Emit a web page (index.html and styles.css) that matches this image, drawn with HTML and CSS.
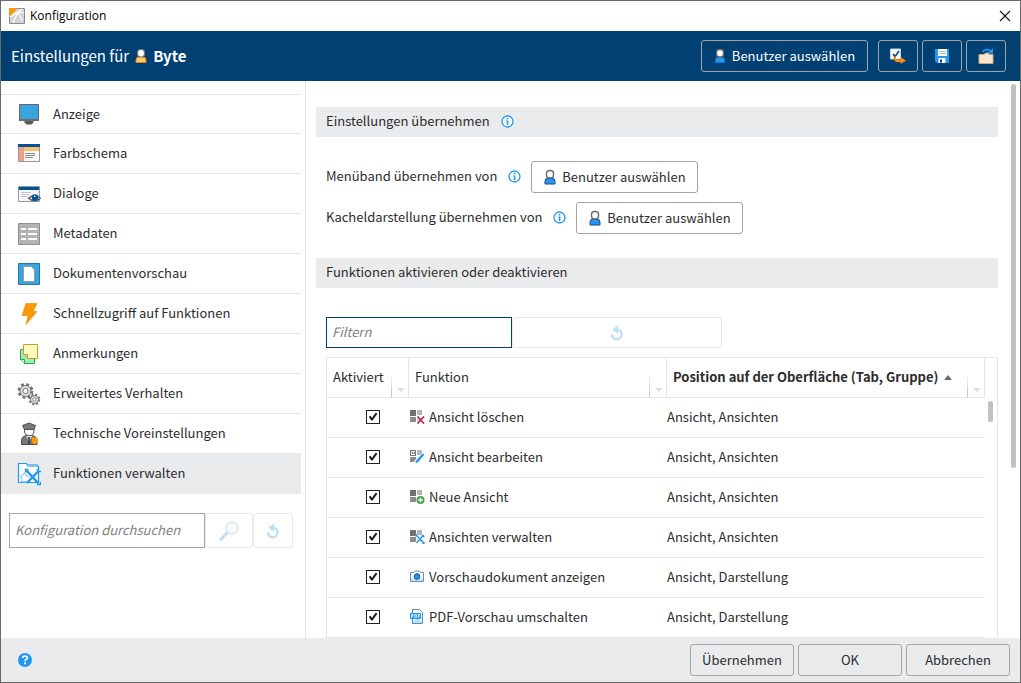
FILE: index.html
```html
<!DOCTYPE html>
<html lang="de">
<head>
<meta charset="utf-8">
<title>Konfiguration</title>
<link rel="stylesheet" href="styles.css">
</head>
<body>
<svg class="sprite" aria-hidden="true">
  <symbol id="user" viewBox="0 0 12 16">
    <path d="M1 15v-2.500q0-3.500 3-3.500h4q3 0 3 3.500V15z" fill="#2196f3" stroke="#174a8c"/>
    <path d="M3.500 8.500 2.500 9.500h7l-1-1z" fill="#2f6fb5"/>
    <rect x="2.500" y="1.500" width="7" height="7.500" rx="3" fill="#fff" stroke="#6b6b6b" stroke-width="1.400"/>
  </symbol>
  <symbol id="info" viewBox="0 0 13 13">
    <circle cx="6.500" cy="6.500" r="5.500" fill="#fff" stroke="#2196f3" stroke-width="1.300"/>
    <path d="M5.700 3h1.600v1.500H5.700zM5.200 5.500h2.200V10H5.800V6.500h-.6z" fill="#2196f3"/>
  </symbol>
  <symbol id="undo" viewBox="0 0 14 16">
    <path d="M7.300 4.600A4.800 4.800 0 1 1 2 9.200" fill="none" stroke="#bbdefb" stroke-width="2.400"/>
    <path d="M8 0v9L2.600 4.700z" fill="#bbdefb"/>
  </symbol>
  <symbol id="tiles" viewBox="0 0 15 15">
    <path d="M0 1h6v6H0z" fill="#6f7072"/>
    <path d="M7 1h5v5H7z" fill="#b4b5b6"/>
    <path d="M0 8h6v5H0z" fill="#8c8d8e"/>
    <path d="M7 8h3v5H7z" fill="#a6a7a8"/>
  </symbol>
</svg>
<div class="window">
  <div class="titlebar">
    <svg class="app-icon" viewBox="0 0 16 16"><path d="M.5.500h15v15H.5z" fill="#d4d4d4" stroke="#8a8a8a"/><path d="M1 9 9 4l6 1M9 4l4-3M9 4l4 8M9 4 4 15" fill="none" stroke="#fff" stroke-width="1.200"/><path d="M0 0h9L0 9z" fill="#f39a0b"/></svg>
    <span class="titlebar-text">Konfiguration</span>
    <button class="close" aria-label="Schließen"><svg viewBox="0 0 12 12"><path d="m1 1 10 10M11 1 1 11" stroke="#111" stroke-width="1.100"/></svg></button>
  </div>

  <header class="header">
    <h1 class="heading">Einstellungen für
      <svg class="icon-user" viewBox="0 0 12 16"><path d="M1 14.500V12q0-3 3-3h4q3 0 3 3v2.500z" fill="#ffcc66" stroke="#f57c00"/><rect x="2.500" y="1.500" width="7" height="7.500" rx="3" fill="#fff" stroke="#777" stroke-width="1.200"/></svg>
      <b>Byte</b></h1>
    <button class="btn btn-dark"><svg class="icon-user"><use href="#user"/></svg>Benutzer auswählen</button>
    <div class="tools">
      <button class="btn btn-dark btn-icon" aria-label="Optionen übertragen"><svg viewBox="0 0 16 16"><path d="M.5 1h10v10H.5z" fill="#f7fbff" stroke="#c9d7e8"/><path d="m3 6 2 2.500L9 3" fill="none" stroke="#174a8c" stroke-width="1.700"/><path d="M4.500 8.500q0 5 4.500 4.500h2" fill="none" stroke="#fb8c00" stroke-width="2.200"/><path d="M10.500 8.700 16 12.800l-5.500 3.200z" fill="#fb8c00"/></svg></button>
      <button class="btn btn-dark btn-icon" aria-label="Speichern"><svg viewBox="0 0 16 16"><path d="M1 1h14v14H3l-2-2z" fill="#2196f3"/><path d="M4 1h9v7H4z" fill="#fff"/><path d="M5 3.500h7M5 5.500h7" stroke="#b9c3cc"/><path d="M4.500 10h7v5h-7z" fill="#fff"/><path d="M6 11.500h2v3H6z" fill="#0b3f78"/></svg></button>
      <button class="btn btn-dark btn-icon" aria-label="Laden"><svg viewBox="0 0 16 16"><path d="M1 15.500V6.500h5l1.500-1.500H11v1.500h4v9z" fill="#f8e8cf" stroke="#d2a679"/><path d="M4.500 4q3-4 8-1" fill="none" stroke="#2196f3" stroke-width="1.700"/><path d="M15 0v5.500H9.500z" fill="#2196f3"/></svg></button>
    </div>
  </header>

  <div class="body">
    <aside class="sidebar">
      <nav class="nav">
        <a class="nav-item" href="#anzeige"><svg viewBox="0 0 24 24"><path d="M2.500 2.500h19v16h-19z" fill="#38a5de" stroke="#666"/><path d="M2 17h20v2H2z" fill="#6b6b6b"/><path d="M7.500 19h9v1.500l-2 2h-5l-2-2z" fill="#58595b"/></svg>Anzeige</a>
        <a class="nav-item" href="#farbschema"><svg viewBox="0 0 24 24"><path d="M1.500 2.500h21v17h-21z" fill="#f5f6f7" stroke="#999"/><path d="M1 2h22v3H1z" fill="#00539b"/><path d="M7 5h15v4H7z" fill="#fdbf6b"/><path d="M2 5h5v14H2z" fill="#ef9f88"/><path d="M8 11.500h10M8 13.500h10M8 15.500h8" stroke="#8c8c8c"/></svg>Farbschema</a>
        <a class="nav-item" href="#dialoge"><svg viewBox="0 0 24 24"><path d="M1.500 4.500h21v15h-21z" fill="#f5f6f7" stroke="#999"/><path d="M2 5h20v3H2z" fill="#00539b"/><path d="M4 10.500h10M4 12.500h8M4 14.500h6" stroke="#c4c4c4"/><path d="M11.500 16.300q6.200-6 12 0-5.800 5.200-12 0z" fill="#fff" stroke="#555" stroke-width="1.200"/><circle cx="18" cy="15.500" r="3.300" fill="#00539b"/><path d="m17 13 2 2h-2z" fill="#fff"/></svg>Dialoge</a>
        <a class="nav-item" href="#metadaten"><svg viewBox="0 0 24 24"><path d="M1.500 1.500h21v21h-21z" fill="#b3b3b3" stroke="#8f8f8f"/><path d="M4 7h5M11 7h9M4 12h5M11 12h9M4 17h5M11 17h9" stroke="#fff" stroke-width="2"/></svg>Metadaten</a>
        <a class="nav-item" href="#dokumentenvorschau"><svg viewBox="0 0 24 24"><path d="M1.500 1.500h21v21h-21z" fill="#38a5de" stroke="#2477aa"/><path d="M6.500 4.500h8l3 3.500v11.500h-11z" fill="#fff" stroke="#9a9a9a"/></svg>Dokumentenvorschau</a>
        <a class="nav-item" href="#schnellzugriff"><svg viewBox="0 0 24 24"><path d="M9 1.500h11l-4 8h4L9 22.500l2-9H5z" fill="#fb9a00" stroke="#f08400" stroke-width=".6"/></svg>Schnellzugriff auf Funktionen</a>
        <a class="nav-item" href="#anmerkungen"><svg viewBox="0 0 24 24"><path d="M3.500 7.500h14v14h-10l-4-4z" fill="#98f0c0" stroke="#27a844"/><path d="M3.500 17.500h4v4" fill="#d5ffe5" stroke="#27a844"/><path d="M6.500 2.500h14v14h-10l-4-4z" fill="#fffabd" stroke="#c79a2c"/><path d="M6.500 12.500h4v4" fill="#f0cc6c" stroke="#c79a2c"/></svg>Anmerkungen</a>
        <a class="nav-item" href="#verhalten"><svg viewBox="0 0 24 24"><g fill="#ddd" stroke="#6f6f6f"><circle cx="8.500" cy="9" r="6.500" stroke-dasharray="2.700 2.400" stroke-width="2.800" fill="none"/><circle cx="8.500" cy="9" r="5.600"/><circle cx="8.500" cy="9" r="2.600" fill="#fff"/><circle cx="17.500" cy="17.500" r="4.700" stroke-dasharray="2 1.700" stroke-width="2.200" fill="none"/><circle cx="17.500" cy="17.500" r="4" stroke-width=".8"/><circle cx="17.500" cy="17.500" r="1.700" stroke-width=".8" fill="#fff"/></g></svg>Erweitertes Verhalten</a>
        <a class="nav-item" href="#technisch"><svg viewBox="0 0 24 24"><path d="M4.500 22.500V19q0-4.500 4.500-5.500h6.500q4.500 1 4.500 5.500v3.500z" fill="#77787a" stroke="#4d4d4f"/><path d="m9 13.500 3 6 3.500-6z" fill="#d9d9d9"/><path d="M12 15v7" stroke="#333" stroke-width="1.500"/><path d="M7.500 5h9.500v4q0 4.500-4.700 4.500T7.500 9z" fill="#fff" stroke="#555"/><path d="M5.500 3.500 12 1l6.500 2.500-1.500 4h-9.500z" fill="#77787a" stroke="#4d4d4f"/><path d="M15 15.500h5.500V20q-1 2-2.800 2.500Q16 22 15 20z" fill="#fb9a00"/></svg>Technische Voreinstellungen</a>
        <a class="nav-item is-active" href="#funktionen" aria-current="page"><svg viewBox="0 0 24 24"><path d="M1.500 20.500v-19h8l1.500 2.500h10.500v16.500z" fill="#fff" stroke="#2196f3" stroke-width="1.200"/><path d="M11 2h10v2.500h-9z" fill="#7bbcf0"/><path d="M3 15.500 7.500 11l4 4.500M4.500 15v4.500h7" fill="none" stroke="#a9cdea" stroke-width="1.500"/><path d="m9.500 8.500 12 13M22 8.500l-12 12.500" stroke="#2196f3" stroke-width="2.500"/><path d="M8.500 10.500V7.500h3M20 7l1.500 2.500h3M20 22.500h3.500V20" fill="none" stroke="#2196f3" stroke-width="1.400"/></svg>Funktionen verwalten</a>
      </nav>
      <form class="search">
        <input class="field" type="text" placeholder="Konfiguration durchsuchen" aria-label="Konfiguration durchsuchen">
        <button class="ghost ghost-search" type="button" aria-label="Suchen"><svg viewBox="0 0 20 20"><path d="m1 19 8-8" stroke="#bbdefb" stroke-width="3"/><circle cx="13" cy="7" r="6" fill="#f6fafd" stroke="#d3d6d9"/></svg></button>
        <button class="ghost ghost-reset" type="button" aria-label="Suche zurücksetzen"><svg><use href="#undo"/></svg></button>
      </form>
    </aside>

    <main class="main">
      <h2 class="section">Einstellungen übernehmen <svg class="icon-info"><use href="#info"/></svg></h2>
      <div class="take-over">
        <div class="row"><span class="row-label">Menüband übernehmen von<svg class="icon-info"><use href="#info"/></svg></span><button class="btn"><svg class="icon-user"><use href="#user"/></svg>Benutzer auswählen</button></div>
        <div class="row"><span class="row-label">Kacheldarstellung übernehmen von<svg class="icon-info"><use href="#info"/></svg></span><button class="btn"><svg class="icon-user"><use href="#user"/></svg>Benutzer auswählen</button></div>
      </div>
      <h2 class="section">Funktionen aktivieren oder deaktivieren</h2>
      <form class="filter">
        <input class="field field-focus" type="text" placeholder="Filtern" aria-label="Filtern">
        <button class="ghost ghost-wide" type="button" aria-label="Filter zurücksetzen"><svg><use href="#undo"/></svg></button>
      </form>
      <div class="grid">
        <table class="table">
          <colgroup><col class="col-check"><col class="col-name"><col></colgroup>
          <thead>
            <tr><th>Aktiviert<span class="menu"></span></th><th>Funktion<span class="menu"></span></th><th class="sorted">Position auf der Oberfläche (Tab, Gruppe)<span class="sort"></span><span class="menu"></span></th></tr>
          </thead>
          <tbody>
            <tr><td class="check"><input type="checkbox" id="f1" checked></td><td><label for="f1"><svg viewBox="0 0 15 15"><use href="#tiles"/><path d="m7 7 7 7.500M14 7l-7 7.500" stroke="#fff" stroke-width="3"/><path d="m7.500 7.500 6.500 7M14 7.500l-6.500 7" stroke="#b8234a" stroke-width="1.700"/></svg>Ansicht löschen</label></td><td>Ansicht, Ansichten</td></tr>
            <tr><td class="check"><input type="checkbox" id="f2" checked></td><td><label for="f2"><svg viewBox="0 0 15 15"><use href="#tiles"/><path d="M.5 1.500h5v5h-5z" fill="#fff" stroke="#777"/><path d="M1.500 3h1v1.500h2V3" fill="none" stroke="#555" stroke-width=".8"/><path d="m5 14 8.500-9" stroke="#fff" stroke-width="4"/><path d="m6 13.500 7.500-8.500" stroke="#2196f3" stroke-width="2.300"/></svg>Ansicht bearbeiten</label></td><td>Ansicht, Ansichten</td></tr>
            <tr><td class="check"><input type="checkbox" id="f3" checked></td><td><label for="f3"><svg viewBox="0 0 15 15"><use href="#tiles"/><circle cx="10.500" cy="11" r="4.500" fill="#fff"/><circle cx="10.500" cy="11" r="4" fill="#43a047"/><path d="M10.500 8.500v5M8 11h5" stroke="#fff" stroke-width="1.300"/></svg>Neue Ansicht</label></td><td>Ansicht, Ansichten</td></tr>
            <tr><td class="check"><input type="checkbox" id="f4" checked></td><td><label for="f4"><svg viewBox="0 0 15 15"><use href="#tiles"/><path d="m6 6 8 8.500M14 6l-8 8.500" stroke="#fff" stroke-width="3"/><path d="m6 6 8 8M13.500 6 6.500 14M6 7.500V6h1.500M12.500 5.500v2h2M12.500 14.500H14V13" fill="none" stroke="#2196f3" stroke-width="1.400"/></svg>Ansichten verwalten</label></td><td>Ansicht, Ansichten</td></tr>
            <tr><td class="check"><input type="checkbox" id="f5" checked></td><td><label for="f5"><svg viewBox="0 0 15 15"><path d="M.5 3.500H4l1-1.500h4.500l1 1.500h3v9H.5z" fill="#fff" stroke="#5c93c4"/><path d="M1 9.500h12V12H1z" fill="#c3dcf2"/><circle cx="7" cy="7.500" r="2.800" fill="#2196f3" stroke="#0d4f94"/></svg>Vorschaudokument anzeigen</label></td><td>Ansicht, Darstellung</td></tr>
            <tr><td class="check"><input type="checkbox" id="f6" checked></td><td><label for="f6"><svg viewBox="0 0 15 15"><path d="M2.500.500h7l3 3v11h-10z" fill="#fff" stroke="#4a90cf"/><path d="M3 12.500 8 9l4 4v1H3z" fill="#c3dcf2"/><path d="M0 4h11v6H0z" fill="#2196f3"/><path d="M1.500 9V5.500H3v1.700H1.500M4.800 8.500v-3h1.500l.5 1.500-.5 1.500zM8.500 9V5.500H10M8.500 7H10" fill="none" stroke="#fff" stroke-width=".8"/></svg>PDF-Vorschau umschalten</label></td><td>Ansicht, Darstellung</td></tr>
          </tbody>
        </table>
        <div class="grid-scroll"><div class="thumb"></div></div>
      </div>
    </main>
    <div class="main-scroll"></div>
  </div>

  <footer class="footer">
    <button class="help" aria-label="Hilfe"><svg viewBox="0 0 14 14"><circle cx="7" cy="7" r="7" fill="#2196f3"/><path d="M4.700 5q0-2 2.300-2t2.300 1.800Q9.300 6 8 6.600q-1 .5-1 1.600" fill="none" stroke="#fff" stroke-width="1.700"/><path d="M6 9.500h2v1.800H6z" fill="#fff"/></svg></button>
    <button class="btn btn-footer">Übernehmen</button>
    <button class="btn btn-footer">OK</button>
    <button class="btn btn-footer">Abbrechen</button>
  </footer>
</div>
</body>
</html>
```

FILE: styles.css
```css
* { box-sizing: border-box; }

body {
  margin: 0;
  font: 13px/20px "Noto Sans CJK SC", "Open Sans", sans-serif;
  color: #2d2d2d;
  background: #fff;
}

.sprite { position: absolute; width: 0; height: 0; }

svg { flex: none; }

button, input { font: inherit; color: inherit; }

.window {
  display: flex;
  flex-direction: column;
  height: 100vh;
  border: 1px solid #68696b;
  overflow: hidden;
}

.titlebar {
  display: flex;
  align-items: center;
  flex: none;
  height: 30px;
  padding: 0 9px 0 8px;
  color: #000;
}
.app-icon { width: 16px; height: 16px; margin-right: 5px; }
.titlebar-text { flex: 1; font: 12px/16px "Open Sans", sans-serif; }
.close { display: flex; padding: 0; border: 0; background: none; }
.close svg { width: 12px; height: 12px; }

.header {
  display: flex;
  align-items: center;
  flex: none;
  height: 50px;
  padding: 0 14px 0 10px;
  gap: 10px;
  background: #004072;
  color: #fff;
}
.heading {
  display: flex;
  align-items: center;
  flex: 1;
  gap: 6px;
  margin: 0;
  font-size: 15px;
  font-weight: 400;
}
.icon-user { width: 12px; height: 16px; }
.icon-info { width: 13px; height: 13px; }
.tools { display: flex; gap: 4px; }

.btn {
  display: flex;
  align-items: center;
  justify-content: center;
  gap: 6px;
  height: 32px;
  padding: 0 12px;
  border: 1px solid #a3a5a7;
  border-radius: 3px;
  background: #fff;
  white-space: nowrap;
}
.row .btn, .header > .btn { width: 167px; }
.btn-dark { background: transparent; color: #fff; }
.btn-icon { width: 40px; padding: 0; }
.btn-icon svg { width: 16px; height: 16px; }

.body { display: flex; flex: 1; min-height: 0; }

.sidebar {
  flex: none;
  width: 305px;
  padding-top: 13px;
  border-right: 1px solid #e4e5e6;
}
.nav { margin-right: 4px; border-top: 1px solid #e6e7e8; }
.nav-item {
  display: flex;
  align-items: center;
  gap: 12px;
  height: 40px;
  padding: 0 16px 2px;
  border-bottom: 1px solid #e6e7e8;
  color: inherit;
  text-decoration: none;
}
.nav-item svg { width: 24px; height: 24px; margin-top: 2px; }
.nav-item:first-child { height: 39px; padding-bottom: 0; }
.nav-item:first-child svg { margin-top: 0; }
.is-active { background: #e9eaec; border-color: #e9eaec; }

.search { display: flex; padding: 19px 12px 0 8px; height: 54px; }
.field {
  flex: 1;
  min-width: 0;
  padding: 0 5px 2px;
  border: 1px solid #a3a5a7;
  border-radius: 0;
  background: #fff;
  outline: 0;
}
.field::placeholder { color: #808080; font-style: italic; opacity: 1; }
.ghost {
  display: flex;
  align-items: center;
  justify-content: center;
  flex: none;
  padding: 0;
  border: 1px solid #e8e9ea;
  border-radius: 3px;
  background: #fff;
}
.ghost svg { width: 14px; height: 16px; }
.ghost-search { width: 48px; }
.ghost-search svg { width: 20px; height: 20px; }
.ghost-reset { width: 40px; }
.ghost-wide { width: 210px; }

.main {
  display: flex;
  flex-direction: column;
  flex: 1;
  min-width: 0;
  padding: 26px 13px 0 10px;
  overflow: hidden;
}
.section {
  display: flex;
  align-items: center;
  flex: none;
  gap: 11px;
  height: 30px;
  margin: 0;
  padding: 0 10px 2px;
  background: #eaebed;
  font-size: 13px;
  font-weight: 400;
}
.take-over { display: grid; gap: 9px; padding: 24px 10px; }
.row { display: flex; align-items: center; gap: 10px; }
.row-label { display: flex; align-items: center; gap: 11px; padding-bottom: 2px; }

.filter { display: flex; flex: none; height: 31px; margin: 29px 10px 9px; }
.filter .field { flex: none; width: 186px; }
.filter .field-focus { border-color: #004072; }

.grid {
  display: flex;
  flex: none;
  align-items: stretch;
  margin-left: 10px;
  border: solid #e4e5e6;
  border-width: 1px 1px 0;
}
.table {
  flex: 1;
  min-width: 0;
  border-collapse: separate;
  border-spacing: 0;
  table-layout: fixed;
}
.col-check { width: 82px; }
.col-name { width: 258px; }
.table th {
  position: relative;
  height: 40px;
  padding: 0 6px 2px;
  border-right: 1px solid #e4e5e6;
  border-bottom: 1px solid #e4e5e6;
  text-align: left;
  font-weight: 400;
  white-space: nowrap;
}
.table th.sorted { font-weight: 700; }
.table td {
  height: 40px;
  padding: 0 0 2px;
  border-bottom: 1px solid #e6e7e8;
}
.table label { display: flex; align-items: center; gap: 4px; padding-left: 1px; }
.table label svg { width: 15px; height: 15px; }

.sort {
  display: inline-block;
  margin-left: 6px;
  border: 4px solid transparent;
  border-top: 0;
  border-bottom: 5px solid #6b6b6b;
  vertical-align: middle;
}
.menu {
  position: absolute;
  right: 0;
  bottom: 0;
  width: 17px;
  height: 23px;
  background: linear-gradient(#fff, #bbb) left / 1px 100% no-repeat;
}
.menu::after {
  content: "";
  position: absolute;
  left: 6px;
  bottom: 5px;
  border: 4px solid transparent;
  border-bottom: 0;
  border-top-color: #dcdddf;
}

.table .check { padding-left: 10px; text-align: center; }
.check input {
  display: grid;
  place-items: center;
  appearance: none;
  width: 14px;
  height: 14px;
  margin: 0 auto;
  border: 1px solid #222;
  background: #fff;
}
.check input:checked::before {
  content: "";
  width: 10px;
  height: 10px;
  background: #222;
  clip-path: polygon(8% 52%, 24% 42%, 40% 62%, 76% 12%, 96% 20%, 46% 90%, 32% 90%);
}

.grid-scroll { width: 12px; padding: 43px 4px 0 3px; }
.thumb { height: 21px; border-radius: 3px; background: #c0c1c3; }

.main-scroll {
  flex: none;
  width: 5px;
  height: 384px;
  margin: 3px 4px 0 0;
  border-radius: 3px;
  background: #c0c1c3;
}

.footer {
  display: flex;
  align-items: center;
  flex: none;
  gap: 4px;
  height: 44px;
  padding: 0 10px 0 17px;
  background: #eaebed;
}
.help { display: flex; margin-right: auto; padding: 0; border: 0; background: none; }
.help svg { width: 14px; height: 14px; }
.btn-footer { width: 104px; background: transparent; }
```
